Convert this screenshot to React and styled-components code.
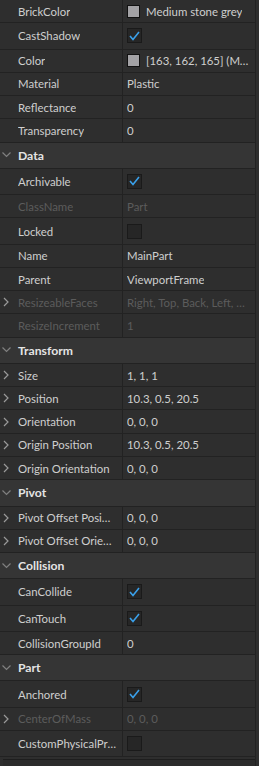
import React from 'react';
import styled, { createGlobalStyle } from 'styled-components';

const GlobalStyle = createGlobalStyle`
  html, body { margin: 0; padding: 0; background: #2e2e2e; overflow: hidden; }
  body { font-family: "Lato", "Roboto", sans-serif; }
`;

const Panel = styled.div`
  display: flex;
  width: 259px;
  height: 766px;
  background: #2e2e2e;
  overflow: hidden;
`;

const Main = styled.div`
  flex: 1;
  min-width: 0;
  display: flex;
  flex-direction: column;
`;

const VScroll = styled.div`
  width: 3px;
  border-left: 1px solid #222222;
  background: #2e2e2e;
`;

const Row = styled.div`
  display: grid;
  grid-template-columns: 123px 1fr;
  height: ${(p) => (p.$tall ? 26.3 : 23.25)}px;
  box-sizing: border-box;
  border-bottom: 1px solid #222222;
  flex-shrink: 0;
`;

const HeaderRow = styled.div`
  display: flex;
  align-items: center;
  height: 26.3px;
  box-sizing: border-box;
  border-bottom: 1px solid #222222;
  background: #353535;
  flex-shrink: 0;
`;

const HeaderTitle = styled.span`
  font-size: 12.2px;
  font-weight: 700;
  color: #e4e4e4;
`;

const LabelCell = styled.div`
  display: flex;
  align-items: center;
  min-width: 0;
  padding-right: 6px;
  border-right: 1px solid #222222;
`;

const Arrow = styled.div`
  width: 18px;
  flex-shrink: 0;
  display: flex;
  align-items: center;
  padding-left: ${(p) => p.$pad}px;
  box-sizing: border-box;
`;

const Label = styled.span`
  font-size: 11.4px;
  color: ${(p) => (p.$disabled ? '#5c5c5c' : '#cfcfcf')};
  white-space: nowrap;
  overflow: hidden;
  text-overflow: ellipsis;
  min-width: 0;
`;

const ValueCell = styled.div`
  display: flex;
  align-items: center;
  gap: 6px;
  padding-left: 4px;
  padding-right: 4px;
  min-width: 0;
`;

const Value = styled(Label)``;

const Swatch = styled.span`
  width: 11px;
  height: 11px;
  flex-shrink: 0;
  background: ${(p) => p.$color};
  border: 1px solid #111111;
`;

const Box = styled.span`
  width: 13px;
  height: 13px;
  flex-shrink: 0;
  background: #262626;
  border: 1px solid #1a1a1a;
  display: flex;
  align-items: center;
  justify-content: center;
`;

const Footer = styled.div`
  flex: 1;
  padding: 2px 0 0 3px;
  display: flex;
`;

const HBar = styled.div`
  flex: 1;
  border-top: 1px solid #1e1e1e;
  background: #2b2b2b;
`;

const RightChevron = () => (
  <svg width="6" height="10" viewBox="0 0 6 10">
    <polyline points="1,1 5,5 1,9" fill="none" stroke="#9a9a9a" strokeWidth="1.2" />
  </svg>
);

const DownChevron = () => (
  <svg width="9" height="6" viewBox="0 0 9 6">
    <polyline points="0.5,0.5 4.5,4.5 8.5,0.5" fill="none" stroke="#808080" strokeWidth="1.2" />
  </svg>
);

const Check = () => (
  <svg width="11" height="10" viewBox="0 0 11 10">
    <polyline points="1,5 4,8.5 10,1" fill="none" stroke="#3aa0ea" strokeWidth="1.6" />
  </svg>
);

const items = [
  { label: 'BrickColor', value: 'Medium stone grey', swatch: '#a3a2a5' },
  { label: 'CastShadow', check: true },
  { label: 'Color', value: '[163, 162, 165] (Medium stone grey)', swatch: '#a3a2a5' },
  { label: 'Material', value: 'Plastic' },
  { label: 'Reflectance', value: '0' },
  { label: 'Transparency', value: '0' },
  { header: 'Data' },
  { label: 'Archivable', check: true },
  { label: 'ClassName', value: 'Part', disabled: true },
  { label: 'Locked', check: false },
  { label: 'Name', value: 'MainPart' },
  { label: 'Parent', value: 'ViewportFrame' },
  { label: 'ResizeableFaces', value: 'Right, Top, Back, Left, Bottom, Front', disabled: true, expand: true },
  { label: 'ResizeIncrement', value: '1', disabled: true },
  { header: 'Transform' },
  { label: 'Size', value: '1, 1, 1', expand: true },
  { label: 'Position', value: '10.3, 0.5, 20.5', expand: true },
  { label: 'Orientation', value: '0, 0, 0', expand: true },
  { label: 'Origin Position', value: '10.3, 0.5, 20.5', expand: true },
  { label: 'Origin Orientation', value: '0, 0, 0', expand: true },
  { header: 'Pivot' },
  { label: 'Pivot Offset Position', value: '0, 0, 0', expand: true },
  { label: 'Pivot Offset Orientation', value: '0, 0, 0', expand: true },
  { header: 'Collision' },
  { label: 'CanCollide', check: true },
  { label: 'CanTouch', check: true },
  { label: 'CollisionGroupId', value: '0' },
  { header: 'Part' },
  { label: 'Anchored', check: true },
  { label: 'CenterOfMass', value: '0, 0, 0', disabled: true, expand: true },
  { label: 'CustomPhysicalProperties', check: false },
];

const PropertyRow = ({ item }) => {
  if (item.header) {
    return (
      <HeaderRow>
        <Arrow $pad={2}>
          <DownChevron />
        </Arrow>
        <HeaderTitle>{item.header}</HeaderTitle>
      </HeaderRow>
    );
  }
  const isCheck = item.check !== undefined;
  return (
    <Row $tall={isCheck}>
      <LabelCell>
        <Arrow $pad={3}>{item.expand && <RightChevron />}</Arrow>
        <Label $disabled={item.disabled}>{item.label}</Label>
      </LabelCell>
      <ValueCell>
        {isCheck ? (
          <Box>{item.check && <Check />}</Box>
        ) : (
          <>
            {item.swatch && <Swatch $color={item.swatch} />}
            <Value $disabled={item.disabled}>{item.value}</Value>
          </>
        )}
      </ValueCell>
    </Row>
  );
};

export default function App() {
  return (
    <>
      <GlobalStyle />
      <Panel>
        <Main>
          {items.map((item, i) => (
            <PropertyRow key={i} item={item} />
          ))}
          <Footer>
            <HBar />
          </Footer>
        </Main>
        <VScroll />
      </Panel>
    </>
  );
}
